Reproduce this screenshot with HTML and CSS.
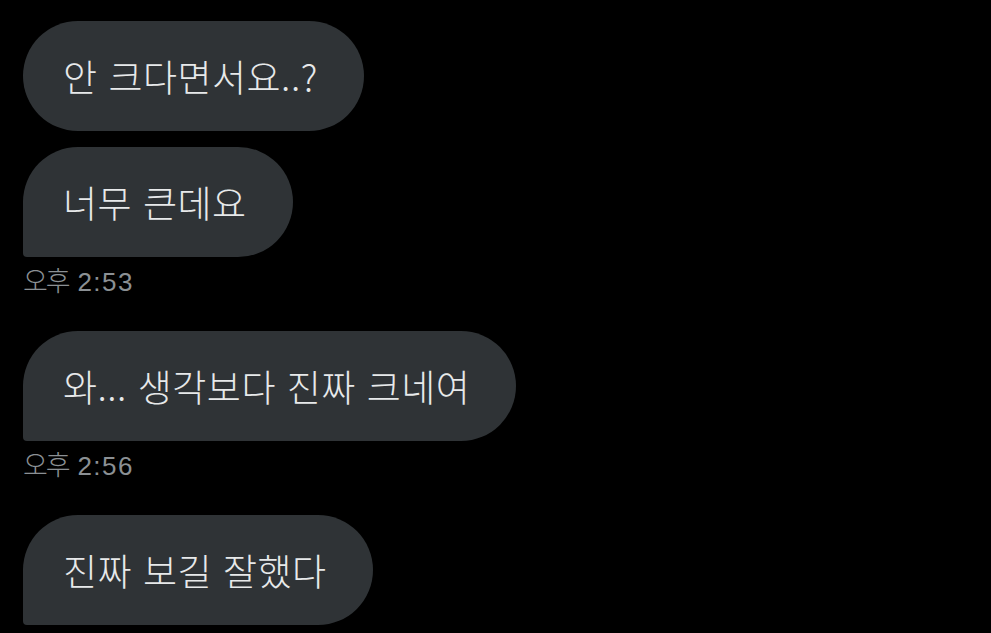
FILE: index.html
```html
<!DOCTYPE html>
<html lang="ko">
<head>
<meta charset="utf-8">
<meta name="viewport" content="width=device-width">
<link rel="stylesheet" href="styles.css">
</head>
<body>
  <div class="thread">
    <div class="group">
      <div class="bubble">안 크다면서요..?</div>
      <div class="bubble last">너무 큰데요</div>
      <div class="time"><span class="ampm">오후</span> 2:53</div>
    </div>
    <div class="group">
      <div class="bubble last">와... 생각보다 진짜 크네여</div>
      <div class="time"><span class="ampm">오후</span> 2:56</div>
    </div>
    <div class="group">
      <div class="bubble last">진짜 보길 잘했다</div>
    </div>
  </div>
</body>
</html>
```

FILE: styles.css
```css
body {
  margin: 0;
  background: #000;
  font-family: "Noto Sans CJK KR", "Noto Sans", sans-serif;
  overflow: hidden;
}
.thread {
  display: flex;
  flex-direction: column;
  gap: 37px;
  padding: 21px 0 0 23px;
}
.group {
  display: flex;
  flex-direction: column;
  align-items: flex-start;
  gap: 16px;
}
.bubble {
  display: flex;
  align-items: center;
  height: 110px;
  padding: 0 46px 0 40px;
  border-radius: 55px;
  background: #2f3336;
  color: #e7e9ea;
  font-size: 37px;
  font-weight: 300;
  letter-spacing: 0.5px;
  box-sizing: border-box;
}
.bubble.last {
  border-bottom-left-radius: 4px;
}
.time {
  margin-top: -5px;
  font-family: "Liberation Sans", "Noto Sans CJK KR", sans-serif;
  font-size: 26px;
  letter-spacing: 1.5px;
  line-height: 24px;
  color: #8b9094;
}
.ampm {
  font-family: "Noto Sans CJK KR", sans-serif;
  font-size: 27px;
  font-weight: 300;
  letter-spacing: -2px;
}
```
